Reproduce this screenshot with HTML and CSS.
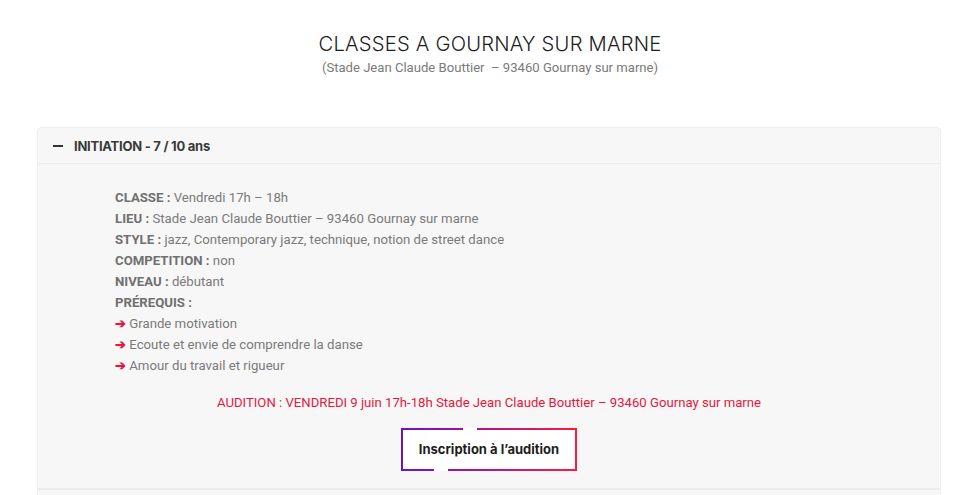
FILE: index.html
```html
<!DOCTYPE html>
<html lang="fr">
<head>
    <meta charset="UTF-8">
    <meta name="viewport" content="width=device-width, initial-scale=1.0">
    <title>Classes a Gournay sur Marne</title>
    <link rel="stylesheet" href="styles.css">
</head>
<body>
    <!-- Titre -->
    <div class="page-head">
        <h1>CLASSES A GOURNAY SUR MARNE</h1>
        <p class="subtitle">(Stade Jean Claude Bouttier &nbsp;– 93460 Gournay sur marne)</p>
    </div>

    <!-- Accordeon -->
    <div class="accordion">
        <div class="acc-item">
            <div class="acc-title">
                <span class="acc-icon"></span>
                <span>INITIATION - 7 / 10 ans</span>
            </div>
            <div class="acc-content">
                <ul class="infos">
                    <li><b>CLASSE :</b> Vendredi 17h – 18h</li>
                    <li><b>LIEU :</b> Stade Jean Claude Bouttier – 93460 Gournay sur marne</li>
                    <li><b>STYLE :</b> jazz, Contemporary jazz, technique, notion de street dance</li>
                    <li><b>COMPETITION :</b> non</li>
                    <li><b>NIVEAU :</b> débutant</li>
                    <li><b>PRÉREQUIS :</b></li>
                    <li><span class="arrow">➔</span> Grande motivation</li>
                    <li><span class="arrow">➔</span> Ecoute et envie de comprendre la danse</li>
                    <li><span class="arrow">➔</span> Amour du travail et rigueur</li>
                </ul>
                <p class="audition">AUDITION : VENDREDI 9 juin 17h-18h Stade Jean Claude Bouttier – 93460 Gournay sur marne</p>
                <div class="btn-wrap">
                    <a class="btn-grad" href="#">Inscription à l’audition</a>
                </div>
            </div>
        </div>
        <div class="acc-item acc-next"></div>
    </div>
</body>
</html>
```

FILE: styles.css
```css
body {
    margin: 0;
    background: #fff;
    font-family: Roboto, "Liberation Sans", Arial, sans-serif;
    color: #7a7a7a;
}
.page-head {
    text-align: center;
    padding-top: 30px;
}
.page-head h1 {
    margin: 0;
    font-family: Inter, "Open Sans", sans-serif;
    font-weight: 300;
    font-size: 20.2px;
    line-height: 28px;
    color: #1c1c1c;
    letter-spacing: 0.2px;
}
.subtitle {
    margin: 0;
    font-size: 13.1px;
    line-height: 20px;
    color: #7a7a7a;
}
.accordion {
    margin: 49px 0 0 37px;
    width: 904px;
}
.acc-item {
    background: #f7f7f7;
    border: 1px solid #eeeeee;
    border-radius: 4px 4px 0 0;
}
.acc-title {
    display: flex;
    align-items: center;
    height: 35px;
    padding-left: 15px;
    border-bottom: 1px solid #ececec;
    font-family: Inter, "Open Sans", sans-serif;
    font-weight: 650;
    font-size: 13px;
    color: #3a3a3a;
    letter-spacing: -0.25px;
}
.acc-icon {
    width: 10px;
    height: 2px;
    background: #333;
    margin-right: 11px;
}
.acc-content {
    padding: 23px 0 17px 77px;
}
.infos {
    list-style: none;
    margin: 0;
    padding: 0;
    font-size: 13.2px;
    line-height: 21px;
}
.infos b {
    color: #707070;
}
.arrow {
    color: #e5173f;
    font-weight: bold;
}
.audition {
    margin: 16px 0 0 -77px;
    text-align: center;
    font-size: 13.15px;
    line-height: 21px;
    color: #e5173f;
}
.btn-wrap {
    margin: 15px 0 0 -77px;
    display: flex;
    justify-content: center;
}
.btn-grad {
    position: relative;
    display: inline-block;
    width: 172px;
    height: 39px;
    line-height: 39px;
    text-align: center;
    text-decoration: none;
    font-family: Inter, "Open Sans", sans-serif;
    font-weight: 650;
    font-size: 13px;
    color: #1d1d1d;
    border: 2px solid transparent;
    background: linear-gradient(#fff, #fff) padding-box,
                linear-gradient(90deg, #6a12cc, #ff1a3d) border-box;
}
/* trous dans la bordure */
.btn-grad::before,
.btn-grad::after {
    content: "";
    position: absolute;
    height: 2px;
    background: #fff;
}
.btn-grad::before {
    top: -2px;
    left: 60px;
    width: 14px;
}
.btn-grad::after {
    bottom: -2px;
    left: 31px;
    width: 14px;
}
.acc-next {
    height: 20px;
    border-radius: 0;
    border-top: 1px solid #ececec;
}
```
